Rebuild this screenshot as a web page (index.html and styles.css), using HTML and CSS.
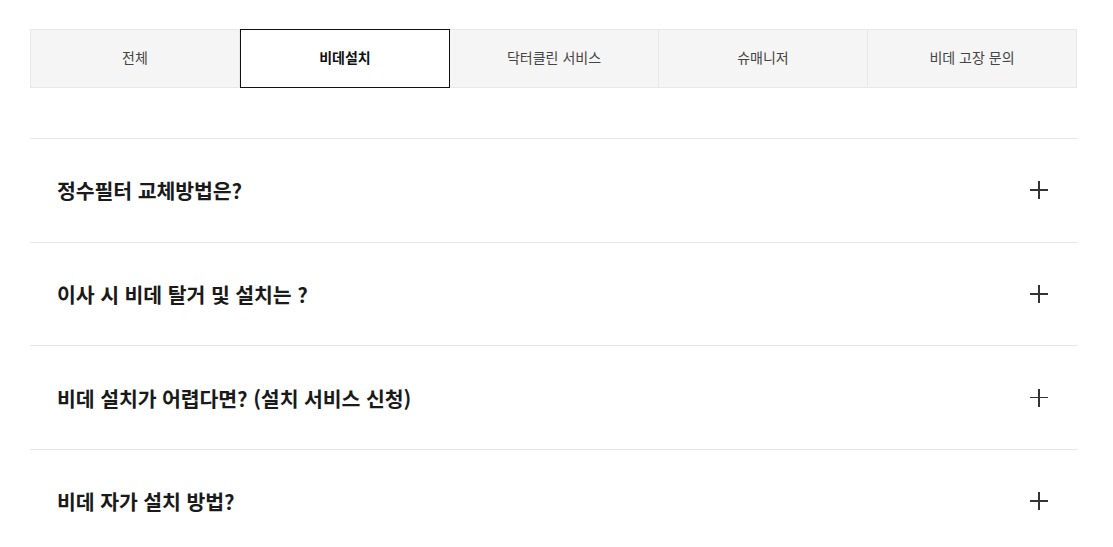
FILE: index.html
```html
<!DOCTYPE html>
<html lang="ko">
<head>
    <meta charset="UTF-8">
    <meta name="viewport" content="width=device-width, initial-scale=1.0">
    <title>자주 묻는 질문</title>
    <link rel="stylesheet" href="styles.css">
</head>
<body>
    <div class="container">
        <ul class="tabs">
            <li class="tab">전체</li>
            <li class="tab active">비데설치</li>
            <li class="tab">닥터클린 서비스</li>
            <li class="tab">슈매니저</li>
            <li class="tab">비데 고장 문의</li>
        </ul>
        <ul class="faq-list">
            <li class="faq-item">
                <span class="faq-title">정수필터 교체방법은?</span>
                <span class="plus"></span>
            </li>
            <li class="faq-item">
                <span class="faq-title">이사 시 비데 탈거 및 설치는 ?</span>
                <span class="plus"></span>
            </li>
            <li class="faq-item">
                <span class="faq-title">비데 설치가 어렵다면? (설치 서비스 신청)</span>
                <span class="plus"></span>
            </li>
            <li class="faq-item">
                <span class="faq-title">비데 자가 설치 방법?</span>
                <span class="plus"></span>
            </li>
        </ul>
    </div>
</body>
</html>
```

FILE: styles.css
```css
body {
    margin: 0;
    padding: 0;
    background: #fff;
    font-family: 'Noto Sans CJK KR', 'Noto Sans', sans-serif;
    color: #111;
}
ul {
    list-style: none;
    margin: 0;
    padding: 0;
}
.container {
    width: 1047px;
    margin-left: 30px;
    padding-top: 29px;
}
.tabs {
    display: grid;
    grid-template-columns: 210px 210px 209px 209px 209px;
    height: 59px;
}
.tab {
    display: flex;
    align-items: center;
    justify-content: center;
    padding-bottom: 3px;
    background: #f5f5f5;
    border: 1px solid #e8e8e8;
    border-left: none;
    font-size: 14px;
    color: #444;
    box-sizing: border-box;
}
.tab:first-child {
    border-left: 1px solid #e8e8e8;
}
.tab.active {
    background: #fff;
    border: 1px solid #111;
    font-weight: bold;
    color: #111;
}
.faq-list {
    margin-top: 50px;
    border-top: 1px solid #e6e6e6;
}
.faq-item {
    display: flex;
    align-items: center;
    justify-content: space-between;
    height: 102.7px;
    padding: 0 29px 0 27px;
    border-bottom: 1px solid #e6e6e6;
}
.faq-title {
    font-size: 20.5px;
    font-weight: bold;
    color: #1a1a1a;
    letter-spacing: -0.1px;
}
.plus {
    position: relative;
    width: 18px;
    height: 18px;
}
.plus::before, .plus::after {
    content: '';
    position: absolute;
    background: #333;
}
.plus::before {
    left: 0;
    top: 8px;
    width: 18px;
    height: 1.5px;
}
.plus::after {
    left: 8px;
    top: 0;
    width: 1.5px;
    height: 18px;
}
```
